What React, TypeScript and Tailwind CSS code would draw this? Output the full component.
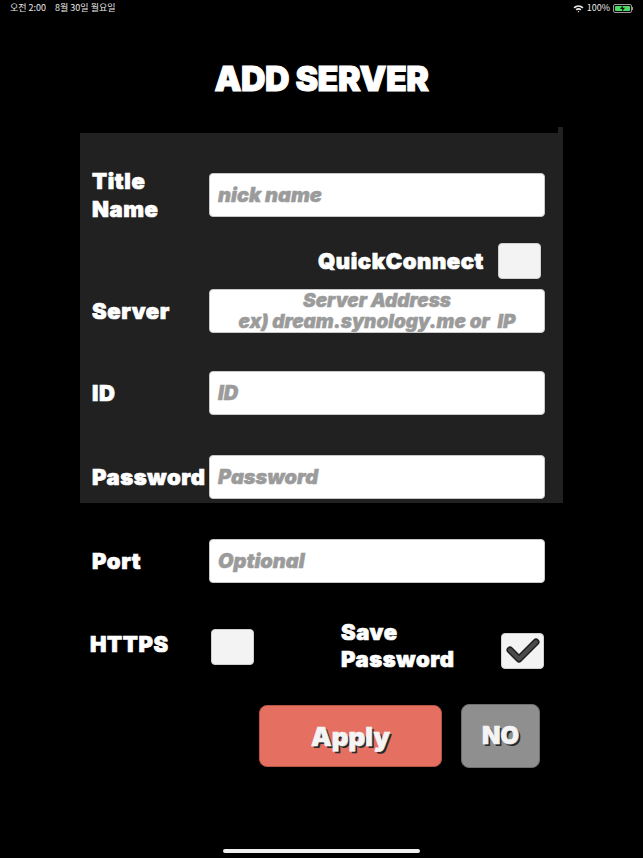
import React from 'react';

const font = { fontFamily: 'Inter, "Noto Sans", sans-serif' };

const Field = ({ placeholder }: { placeholder: string }) => (
  <div className="w-[336px] h-[44px] bg-white rounded-[4px] border border-[#c8c8c8] flex items-center px-[8px]">
    <span className="text-[20px] font-black italic text-[#9b9b9b] leading-none [-webkit-text-stroke:0.5px_#9b9b9b]">
      {placeholder}
    </span>
  </div>
);

const Box = ({ checked }: { checked?: boolean }) => (
  <div className="w-[43px] h-[36px] bg-[#f3f3f3] rounded-[4px] border border-[#d0d0d0] flex items-center justify-center">
    {checked && (
      <svg width="34" height="26" viewBox="0 0 34 26">
        <polyline points="4,12 13,21 30,4" fill="none" stroke="#1e1e1e" strokeWidth="7" strokeLinecap="round" strokeLinejoin="round" />
        <polyline points="4,12 13,21 30,4" fill="none" stroke="#4a4a4a" strokeWidth="4" strokeLinecap="round" strokeLinejoin="round" />
      </svg>
    )}
  </div>
);

const label = 'text-[22px] font-black tracking-[0.6px] [-webkit-text-stroke:0.7px_white]';

export default function App() {
  return (
    <div className="w-[643px] h-[858px] bg-black relative overflow-hidden text-white" style={font}>
      {/* status bar */}
      <div
        className="h-[16px] flex items-center justify-between px-[10px] text-[9px] text-[#e8e8e8]"
        style={{ fontFamily: '"Noto Sans CJK KR", "Noto Sans", sans-serif' }}
      >
        <div className="flex gap-[9px]">
          <span>오전 2:00</span>
          <span>8월 30일 월요일</span>
        </div>
        <div className="flex items-center gap-[3px]">
          <svg width="11" height="9" viewBox="0 0 11 9">
            <path d="M0.5 3.2 A7.5 7.5 0 0 1 10.5 3.2 L9.3 4.4 A5.8 5.8 0 0 0 1.7 4.4 Z" fill="#e8e8e8" />
            <path d="M2.6 5.3 A4.5 4.5 0 0 1 8.4 5.3 L7.2 6.5 A2.8 2.8 0 0 0 3.8 6.5 Z" fill="#e8e8e8" />
            <path d="M4.6 7.4 A1.3 1.3 0 0 1 6.4 7.4 L5.5 8.5 Z" fill="#e8e8e8" />
          </svg>
          <span>100%</span>
          <div className="flex items-center">
            <div className="w-[19px] h-[9px] rounded-[2px] border border-[#9a9a9a] p-[1px]">
              <div className="w-full h-full bg-[#4cd964] rounded-[1px] flex items-center justify-center">
                <svg width="5" height="7" viewBox="0 0 5 7">
                  <path d="M3 0 L0 4 L2.3 4 L1.8 7 L5 2.8 L2.7 2.8 Z" fill="#111" />
                </svg>
              </div>
            </div>
            <div className="w-[1px] h-[3px] bg-[#9a9a9a]" />
          </div>
        </div>
      </div>

      {/* title */}
      <div className="mt-[46px] text-center text-[34px] font-black leading-none tracking-[-0.5px] [-webkit-text-stroke:1px_white]">
        ADD SERVER
      </div>

      {/* panel */}
      <div className="ml-[80px] mt-[37px] w-[483px] h-[370px] bg-[#212121] relative pl-[12px] pt-[40px]">
        <div className="absolute -top-[6px] right-0 w-[5px] h-[6px] bg-[#212121]" />
        <div className="flex items-center h-[44px]">
          <div className={`w-[117px] leading-[28px] ${label}`}>
            Title
            <br />
            Name
          </div>
          <Field placeholder="nick name" />
        </div>
        <div className="mt-[26px] h-[36px] flex items-center justify-end pr-[22px] gap-[14px]">
          <span className={`leading-none ${label}`}>QuickConnect</span>
          <Box />
        </div>
        <div className="mt-[10px] flex items-center h-[44px]">
          <div className={`w-[117px] leading-none ${label}`}>Server</div>
          <div className="w-[336px] h-[44px] bg-white rounded-[4px] border border-[#c8c8c8] flex flex-col items-center overflow-hidden">
            <span className="text-[19px] font-black italic text-[#9b9b9b] leading-[21px] [-webkit-text-stroke:0.5px_#9b9b9b]">
              Server Address
            </span>
            <span className="text-[19px] font-black italic text-[#9b9b9b] leading-[21px] whitespace-pre [-webkit-text-stroke:0.5px_#9b9b9b]">
              ex) dream.synology.me or  IP
            </span>
          </div>
        </div>
        <div className="mt-[38px] flex items-center h-[44px]">
          <div className={`w-[117px] leading-none ${label}`}>ID</div>
          <Field placeholder="ID" />
        </div>
        <div className="mt-[40px] flex items-center h-[44px]">
          <div className={`w-[117px] leading-none ${label} text-[21px] tracking-[0.2px]`}>Password</div>
          <Field placeholder="Password" />
        </div>
      </div>

      {/* port */}
      <div className="ml-[92px] mt-[36px] flex items-center h-[44px]">
        <div className={`w-[117px] leading-none ${label}`}>Port</div>
        <Field placeholder="Optional" />
      </div>

      {/* checkboxes */}
      <div className="ml-[90px] mt-[38px] h-[52px] flex items-center">
        <div className={`w-[121px] leading-none -mt-[6px] ${label}`}>HTTPS</div>
        <Box />
        <div className={`ml-[87px] w-[160px] leading-[27px] -mt-[2px] ${label}`}>
          Save
          <br />
          Password
        </div>
        <div className="mt-[8px]">
          <Box checked />
        </div>
      </div>

      {/* buttons */}
      <div className="ml-[259px] mt-[31px] flex items-center gap-[19px]">
        <button className="w-[183px] h-[62px] bg-[#e56f61] border border-[#b85446] rounded-[8px] text-[26px] font-black text-[#f4f4f4] [text-shadow:2px_2px_0_#2a2a2a] [-webkit-text-stroke:0.6px_#f4f4f4]">
          Apply
        </button>
        <button className="w-[79px] h-[64px] bg-[#8f8f8f] border border-[#6e6e6e] rounded-[8px] text-[24px] font-black text-[#f4f4f4] [text-shadow:2px_2px_0_#2a2a2a] [-webkit-text-stroke:0.6px_#f4f4f4]">
          NO
        </button>
      </div>

      {/* home indicator */}
      <div className="absolute bottom-[5px] left-[223px] w-[197px] h-[4px] rounded-full bg-[#f0f0f0]" />
    </div>
  );
}
